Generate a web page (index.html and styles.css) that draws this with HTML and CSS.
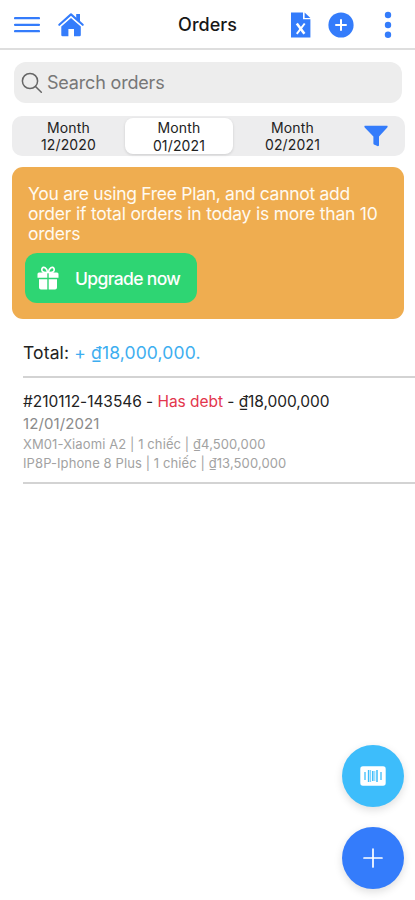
FILE: index.html
```html
<!DOCTYPE html>
<html lang="en">
<head>
<meta charset="utf-8">
<title>Orders</title>
<link rel="stylesheet" href="styles.css">
</head>
<body>
<header class="bar">
  <div class="bar-left">
    <svg class="menu" width="26" height="18" viewBox="0 0 26 18"><path d="M1 2.200h24M1 8.800h24M1 15.200h24" fill="none" stroke="currentColor" stroke-width="2.200" stroke-linecap="round"/></svg>
    <svg class="home" width="26" height="26" viewBox="0 0 26 26"><path d="M18.200 2h3.800v8l-3.800-3.300z" fill="currentColor"/><path d="M13 6 22.800 14.500V23q0 1.300-1.300 1.300H16v-7.200h-5.600v7.200H4.600q-1.300 0-1.300-1.300v-8.500z" fill="currentColor"/><path d="M1.300 12.800 13 2.400l11.700 10.400" fill="none" stroke="currentColor" stroke-width="2.100" stroke-linecap="round" stroke-linejoin="round"/><path d="M2.500 14.200 13 4.800 23.500 14.200" fill="none" stroke="#fff" stroke-width=".7"/></svg>
  </div>
  <h1 class="title">Orders</h1>
  <div class="bar-right">
    <svg class="sheet" width="20" height="26" viewBox="0 0 20 26"><path d="M0 .5h12v6.800h7.400V25.500H0z" fill="currentColor"/><path d="M13.600.5l5.800 5.400h-5.800z" fill="currentColor"/><path d="M5.800 11.500l7.600 10.300" stroke="#fff" stroke-width="2.600"/><path d="M13.700 11.500 5.800 21.800" stroke="#fff" stroke-width="2"/></svg>
    <svg class="add" width="26" height="26" viewBox="0 0 26 26"><circle cx="13" cy="13" r="12.600" fill="currentColor"/><path d="M13 8v10M8 13h10" stroke="#fff" stroke-width="2" stroke-linecap="round"/></svg>
    <svg class="dots" width="8" height="28" viewBox="0 0 8 28"><g fill="currentColor"><circle cx="4" cy="4" r="3.200"/><circle cx="4" cy="14" r="3.200"/><circle cx="4" cy="23.800" r="3.200"/></g></svg>
  </div>
</header>
<main>
  <div class="search">
    <svg width="22" height="22" viewBox="0 0 22 22" fill="none" stroke="currentColor" stroke-width="1.500" stroke-linecap="round"><circle cx="9" cy="9" r="7.600"/><path d="M14.500 14.500 20.300 20.300"/></svg>
    <span>Search orders</span>
  </div>
  <nav class="months">
    <div class="month">Month<br>12/2020</div>
    <div class="month active">Month<br>01/2021</div>
    <div class="month">Month<br>02/2021</div>
    <div class="filter"><svg width="26" height="22" viewBox="0 0 26 22"><path d="M1.700.8h22.600q.8.800 0 1.700L16 11.400v9q-.6.900-1.600.7l-3.500-1.700q-.5-.3-.5-1v-7L1.700 2.500q-.8-.9 0-1.700z" fill="currentColor"/></svg></div>
  </nav>
  <section class="notice">
    <p><span class="line-a">You are using Free Plan, and cannot add</span><br><span class="line-b">order if total orders in today is more than 10</span><br>orders</p>
    <button class="upgrade">
      <svg width="22" height="24" viewBox="0 0 22 24"><path d="M10.600 6.500C5.500 7 4 4.800 5 2.600 6.300 0 10 1.400 10.600 6.500zM11.400 6.500C16.500 7 18 4.800 17 2.600 15.700 0 12 1.400 11.400 6.500z" fill="none" stroke="#fff" stroke-width="1.700"/><path d="M2 6.500h8.300v5.300H.5V8Q.5 6.500 2 6.500zM11.700 6.500H20q1.500 0 1.500 1.500v3.800h-9.800zM2 13.200h8.300v10.300H4q-2 0-2-2zM11.700 13.200H20v8.300q0 2-2 2h-6.300z" fill="#fff"/></svg>
      <span>Upgrade now</span>
    </button>
  </section>
  <div class="total">Total: <span>+ ₫18,000,000.</span></div>
  <article class="order">
    <div class="head">#210112-143546 - <span>Has debt</span> - ₫18,000,000</div>
    <div class="date">12/01/2021</div>
    <div class="item">XM01-Xiaomi A2 | 1 chiếc | ₫4,500,000</div>
    <div class="item">IP8P-Iphone 8 Plus | 1 chiếc | ₫13,500,000</div>
  </article>
</main>
<div class="fabs">
  <div class="fab scan"><svg width="26" height="20" viewBox="0 0 26 20"><rect x=".3" y=".3" width="25.400" height="19.400" rx="2.600" fill="#fff"/><path d="M5 6v8M21 6v8" stroke="#3dbdfb" stroke-width="1.300"/><path d="M8.600 4v12M12.800 5v10M17 4v12" stroke="#3dbdfb" stroke-width="1.500"/><path d="M10.600 4v12M14.800 5v10" stroke="#3dbdfb" stroke-width=".7"/></svg></div>
  <div class="fab create"><svg width="20" height="20" viewBox="0 0 20 20"><path d="M10 1v18M1 10h18" stroke="#fff" stroke-width="1.700" stroke-linecap="round"/></svg></div>
</div>
</body>
</html>
```
FILE: styles.css
```css
* { box-sizing: border-box; }
body { margin: 0; height: 900px; overflow: hidden; background: #fff; color: #222; font-family: Inter, "Liberation Sans", sans-serif; }
svg { display: block; flex: none; }
.bar { height: 50px; display: grid; grid-template-columns: 150px 1fr 150px; align-items: center; border-bottom: 2px solid #dedede; color: #347cfb; }
.bar-left { display: flex; align-items: center; padding-left: 14px; gap: 18px; }
.home { margin-top: 1px; }
.menu { margin-top: 2px; }
.title { margin: 2px 0 0; text-align: center; font-size: 18px; line-height: 24px; font-weight: 500; color: #171717; }
.bar-right { display: flex; align-items: center; padding-left: 26px; gap: 17px; margin-top: 1px; }
.dots { margin-left: 13px; }
.search { margin: 12px 13px 0 14px; height: 41px; border-radius: 12px; background: #ededed; display: flex; align-items: center; padding-left: 7px; gap: 4px; color: #777; font-size: 18px; letter-spacing: -.18px; }
.search svg { color: #666; }
.months { margin: 13px 10px 0 12px; height: 40px; border-radius: 10px; background: #ededee; display: grid; grid-template-columns: 113px 108px 119px 1fr; align-items: center; }
.month { text-align: center; font-size: 14px; line-height: 17.500px; letter-spacing: .15px; }
.active { height: 36px; padding-top: 1px; border-radius: 8px; background: #fff; box-shadow: 0 1px 3px #0002; }
.filter { padding-left: 11px; color: #347cfb; }
.notice { margin: 11px 11px 0 12px; height: 152px; border-radius: 11px; background: #efad50; padding: 17px 0 0 13px; color: #fffaf0; }
.notice p { margin: 0 0 8px 3px; height: 61px; font-size: 17.500px; line-height: 20px; letter-spacing: -.22px; white-space: nowrap; }
.line-a { letter-spacing: -.29px; }
.upgrade { width: 172px; height: 50px; border: 0; border-radius: 12px; background: #2ed573; color: #fff; display: flex; align-items: center; gap: 16px; padding: 0 0 0 12px; font: 500 17.500px Inter, sans-serif; letter-spacing: -.650px; white-space: nowrap; }
.total { height: 59px; margin-left: 23px; padding-top: 22px; border-bottom: 2px solid #d3d3d3; font-size: 17.500px; line-height: 24px; letter-spacing: .14px; }
.total span { color: #3daef0; }
.order { height: 106px; margin-left: 23px; padding-top: 14px; border-bottom: 2px solid #d3d3d3; white-space: nowrap; }
.head { font-size: 15.500px; line-height: 20px; letter-spacing: -.05px; }
.head span { color: #e3364d; }
.date { font-size: 15px; line-height: 23px; letter-spacing: .1px; color: #8b8b8b; }
.item { font-size: 13px; line-height: 19px; letter-spacing: .1px; color: #a2a2a2; }
.fabs { position: absolute; left: 342px; top: 745px; display: grid; gap: 20px; }
.fab { width: 62px; height: 62px; border-radius: 50%; display: grid; place-items: center; box-shadow: 0 3px 9px #0002; }
.scan { background: #3dbdfb; }
.create { background: #347cfb; }
```
